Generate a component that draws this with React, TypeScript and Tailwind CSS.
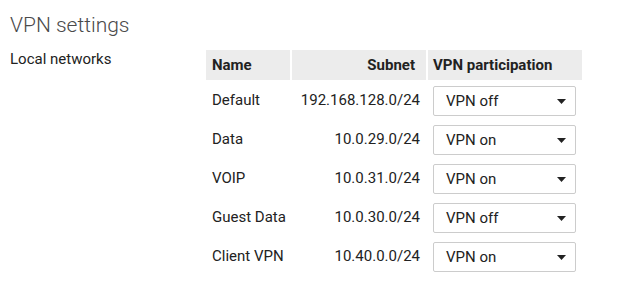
import React from "react";

const rows = [
  { name: "Default", subnet: "192.168.128.0/24", vpn: "VPN off" },
  { name: "Data", subnet: "10.0.29.0/24", vpn: "VPN on" },
  { name: "VOIP", subnet: "10.0.31.0/24", vpn: "VPN on" },
  { name: "Guest Data", subnet: "10.0.30.0/24", vpn: "VPN off" },
  { name: "Client VPN", subnet: "10.40.0.0/24", vpn: "VPN on" },
];

function Select({ value }: { value: string }) {
  return (
    <div className="flex h-[30px] w-[143px] items-center justify-between rounded-[2px] border border-[#cccccc] bg-white pl-[12px] pr-[9px] text-[#222]">
      <span>{value}</span>
      <svg width="9" height="5" viewBox="0 0 9 5">
        <path d="M0 0 L9 0 L4.5 5 Z" fill="#222" />
      </svg>
    </div>
  );
}

export default function App() {
  return (
    <div
      className="min-h-[299px] w-[619px] bg-white text-[15px] text-[#333]"
      style={{ fontFamily: "Roboto, 'Liberation Sans', sans-serif" }}
    >
      <div className="px-[10px] pt-[11px]">
        <h1 className="text-[21px] font-light leading-[28px] text-[#4a4a4a]">VPN settings</h1>
        <div className="mt-[12px] flex">
          <div className="w-[196px] leading-[16px] text-[#222]">Local networks</div>
          <div className="-mt-[1px] grid grid-cols-[84px_134px_154px] gap-x-[2px]">
            <div className="flex h-[30px] items-center bg-[#ececec] pl-[6px] font-bold text-[#222]">Name</div>
            <div className="flex h-[30px] items-center justify-end bg-[#ececec] pr-[11px] font-bold text-[#222]">Subnet</div>
            <div className="flex h-[30px] items-center bg-[#ececec] pl-[5px] font-bold text-[#222]">VPN participation</div>
            {rows.map((r) => (
              <React.Fragment key={r.name}>
                <div className="flex h-[39px] items-center pt-[1px] pl-[6px] text-[#222]">{r.name}</div>
                <div className="flex h-[39px] items-center justify-end pt-[1px] pr-[6px] text-[#222]">{r.subnet}</div>
                <div className="flex h-[39px] items-start pl-[5px] pt-[6px]">
                  <Select value={r.vpn} />
                </div>
              </React.Fragment>
            ))}
          </div>
        </div>
      </div>
    </div>
  );
}
